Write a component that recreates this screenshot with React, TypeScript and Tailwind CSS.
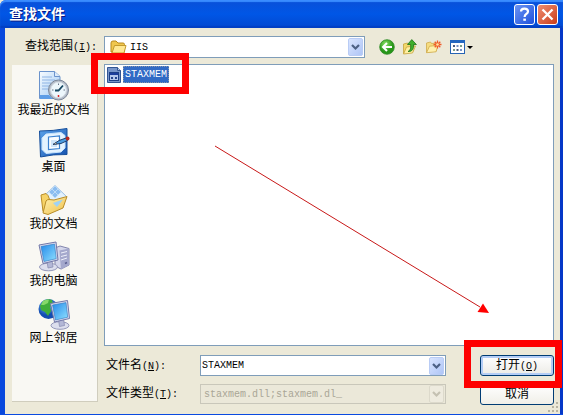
import React from 'react';

const cjk = "font-['Liberation_Sans','Noto_Sans_CJK_SC',sans-serif]";
const mono = "font-['Liberation_Mono','Noto_Sans_CJK_SC',monospace] text-[10px]";

export default function App() {
  return (
    <div className={`relative flex min-h-screen flex-col border-b border-[#0a4be0] bg-[#ece9d8] text-[12px] text-black ${cjk}`}>
      <TitleBar />
      <main className="flex flex-1 flex-col border-r-3 border-l-5 border-r-[#0538c8] border-l-[#0848dd] pt-2 pr-[6px] pl-[7px]">
        {/* Look-in row */}
        <div className="flex h-[22px] items-center">
          <label htmlFor="look-in" className="w-[92px] shrink-0 pl-[13px] leading-[18px] whitespace-nowrap">
            查找范围<Key letter="I" />
          </label>
          <div className="relative flex h-[22px] flex-1 items-center border border-[#7f9db9] bg-white">
            <span className="pointer-events-none absolute left-[5px]"><FolderIcon /></span>
            <select id="look-in" className={`h-full w-full appearance-none pl-[25px] outline-none ${mono}`}>
              <option>IIS</option>
            </select>
            <span className="pointer-events-none absolute right-px"><DropArrow /></span>
          </div>
          <div className="ml-[14px] flex w-[175px] items-center gap-[7px]">
            <button aria-label="后退"><BackIcon /></button>
            <button aria-label="向上一级"><UpIcon /></button>
            <button aria-label="新建文件夹"><NewFolderIcon /></button>
            <button aria-label="查看菜单"><ViewIcon /></button>
          </div>
        </div>

        <div className="mt-[6px] flex gap-[6px]">
          <Places />
          <div className="flex min-w-0 flex-1 flex-col">
            <FileList />
            <FileForm />
          </div>
        </div>
      </main>
      {/* Resize grip */}
      <svg className="absolute right-1 bottom-px" width="11" height="11" viewBox="0 0 11 11" fill="#b8b4a2" aria-hidden="true">
        <path d="M8 0h2v2H8zM4 4h2v2H4zM8 4h2v2H8zM0 8h2v2H0zM4 8h2v2H4zM8 8h2v2H8z" />
      </svg>
    </div>
  );
}

function TitleBar() {
  return (
    <header className="flex h-7 items-center rounded-tl-md bg-linear-to-b from-[#0a4fd8] via-[#0056e6] to-[#0348d0] pr-[5px] pl-[9px] shadow-[inset_0_2px_1px_#3a8cff,inset_0_-2px_1px_#0340c4]">
      <h1 className="flex-1 text-[14px] leading-5 font-bold text-white [text-shadow:1px_1px_0_#0a1883]">查找文件</h1>
      <div className="flex gap-[2px]">
        <button aria-label="帮助" className="flex h-[21px] w-[21px] items-center justify-center rounded-[3px] border border-white bg-linear-to-br from-[#6c93f2] to-[#1e4fdc]">
          <svg width="17" height="17" viewBox="0 0 17 17" fill="none" stroke="#fff" strokeWidth="2.2">
            <path d="M5 5.6C5 3.4 6.4 2.6 8.4 2.6s3.6 1 3.6 2.9c0 2.500-3.400 2.500-3.400 5.400" />
            <path d="M7.3 13.700h2.600" />
          </svg>
        </button>
        <button aria-label="关闭" className="flex h-[21px] w-[21px] items-center justify-center rounded-[3px] border border-white bg-linear-to-br from-[#ef8d70] to-[#c93a12]">
          <svg width="17" height="17" viewBox="0 0 17 17" stroke="#fff" strokeWidth="2.3">
            <path d="M3.5 3.5l10 10M13.5 3.5l-10 10" />
          </svg>
        </button>
      </div>
    </header>
  );
}

// Access key shown after a label, e.g. (N):
function Key({ letter, colon = true }: { letter: string; colon?: boolean }) {
  return (
    <span className="font-['Liberation_Mono',monospace] text-[10px]">
      (<span className="underline">{letter}</span>){colon && ':'}
    </span>
  );
}

const places = [
  { name: '我最近的文档', icon: <RecentIcon /> },
  { name: '桌面', icon: <DesktopIcon /> },
  { name: '我的文档', icon: <DocumentsIcon /> },
  { name: '我的电脑', icon: <ComputerIcon /> },
  { name: '网上邻居', icon: <NetworkIcon /> },
];

function Places() {
  return (
    <nav className="mt-px flex w-[86px] shrink-0 flex-col gap-[9px] self-start border-r border-b border-[#d0cdbd] bg-[#f9f8f3] pt-[5px] pr-[2px] pb-[55px]">
      {places.map((p) => (
        <button key={p.name} className="flex flex-col items-center leading-4 whitespace-nowrap">
          {p.icon}
          <span>{p.name}</span>
        </button>
      ))}
    </nav>
  );
}

function FileList() {
  return (
    <div className="relative h-[282px] border border-[#7f9db9] bg-white p-px">
      <button className="relative flex h-[17px] items-center gap-[2px] pl-px">
        <DllIcon />
        <span className={`h-[17px] border border-dotted border-[#8a97a8] bg-[#316ac5] px-px leading-[15px] text-white ${mono}`}>STAXMEM</span>
      </button>
      <div className="pointer-events-none absolute -top-[12px] -left-[14px] h-[41px] w-[98px] border-7 border-[#fe0000]" />
      <svg className="pointer-events-none absolute top-[80px] left-[109px]" width="276" height="170" viewBox="0 0 276 170" aria-hidden="true">
        <path d="M1 1L266 162" stroke="#c81818" strokeWidth="1" />
        <path d="M275 168l-11.500-1 5.500-8.500z" fill="#f00" />
      </svg>
    </div>
  );
}

function FileForm() {
  return (
    <form className="mt-[9px] grid grid-cols-[96px_1fr_74px] gap-y-[7px]" onSubmit={(e) => e.preventDefault()}>
      <label htmlFor="file-name" className="pl-[2px] leading-[21px]">
        文件名<Key letter="N" />
      </label>
      <div className="mr-[34px] flex h-[21px] items-center border border-[#7f9db9] bg-white pr-px">
        <input id="file-name" defaultValue="STAXMEM" className={`min-w-0 flex-1 pl-px outline-none ${mono}`} />
        <button type="button" aria-label="文件名列表"><DropArrow /></button>
      </div>
      <div className="relative">
        <button className="h-[21px] w-full rounded-[3px] border border-[#003c74] bg-linear-to-b from-white to-[#ecebe6] leading-[17px] shadow-[inset_0_0_0_2px_#b4cdf6]">
          打开<Key letter="O" colon={false} />
        </button>
        <div className="pointer-events-none absolute -top-[15px] -left-[16px] z-10 h-[48px] w-[98px] border-7 border-[#fe0000]" />
      </div>

      <label htmlFor="file-type" className="pl-[2px] leading-[19px]">
        文件类型<Key letter="T" />
      </label>
      <div className="relative mr-[34px] flex h-[20px] items-center border border-[#c9c7ba] bg-[#ebe8d9]">
        <select id="file-type" disabled className={`h-full w-full appearance-none pl-[3px] text-[#a9a696] opacity-100 ${mono}`}>
          <option>staxmem.dll;staxmem.dl_</option>
        </select>
        <span className="pointer-events-none absolute right-px"><DropArrow disabled /></span>
      </div>
      <button type="button" className="h-[21px] rounded-[3px] border border-[#003c74] bg-linear-to-b from-white to-[#f0efe8] leading-[19px]">取消</button>
    </form>
  );
}

function DropArrow({ disabled = false }: { disabled?: boolean }) {
  return (
    <svg className="block" width="15" height="18" viewBox="0 0 15 18">
      <defs>
        <linearGradient id="drop" x2="1" y2="1">
          <stop stopColor="#dbe6ff" />
          <stop offset="1" stopColor="#adc4f6" />
        </linearGradient>
      </defs>
      <rect x=".5" y=".5" width="14" height="17" rx="1.5" fill={disabled ? '#eeebdf' : 'url(#drop)'} stroke={disabled ? '#dcd9cb' : '#b9ccf5'} />
      <path d="M4 7l3.500 3.500L11 7" fill="none" stroke={disabled ? '#c4c1b2' : '#4d6185'} strokeWidth="2.200" />
    </svg>
  );
}

function FolderIcon() {
  return (
    <svg width="17" height="16" viewBox="0 0 17 16">
      <path d="M1 13V4q0-2 2-2h3l2 2h5q1.500 0 1.500 1.500V13z" fill="#f0c74e" stroke="#b98a1c" />
      <path d="M2 14L4.500 6.500H16L14 14z" fill="#ffe893" stroke="#c49a2c" />
    </svg>
  );
}

function DllIcon() {
  return (
    <svg width="14" height="16" viewBox="0 0 14 16">
      <path d="M.5.5h10l3 3v12H.5z" fill="#7795c9" stroke="#335693" />
      <path d="M10.500.5v3h3" fill="#b8c9e8" stroke="#335693" />
      <rect x="2.500" y="5.500" width="9" height="8" fill="#b5c8ec" stroke="#1d3f86" />
      <path d="M3 6h8v2H3z" fill="#1d3f9c" />
      <path d="M4 10h2v2H4zM8 10h2v2H8z" fill="#27468c" />
    </svg>
  );
}

function BackIcon() {
  return (
    <svg width="16" height="16" viewBox="0 0 16 16">
      <defs>
        <radialGradient id="back" cx=".4" cy=".3">
          <stop stopColor="#8be266" />
          <stop offset="1" stopColor="#279618" />
        </radialGradient>
      </defs>
      <circle cx="8" cy="8" r="7.300" fill="url(#back)" stroke="#2f8a26" strokeWidth=".8" />
      <path d="M13 8H4.500M8 4L4 8l4 4" fill="none" stroke="#fff" strokeWidth="2" />
    </svg>
  );
}

function UpIcon() {
  return (
    <svg width="16" height="16" viewBox="0 0 16 16">
      <path d="M1.500 14.500V5l4-1 1 1.500 5-.5v7z" fill="#f3d76c" stroke="#c7a33c" strokeWidth=".8" />
      <path d="M1.500 15l3-7 9-1-3 7z" fill="#fff0a2" stroke="#c7a33c" strokeWidth=".8" />
      <path d="M6 12.500c2.500-1 3-3.500 2.600-7H5.500L9.800.6l4.600 4.900h-2.800c.4 4.500-1.600 7.500-5.600 7z" fill="#3fae2c" stroke="#1f7418" strokeWidth=".8" />
    </svg>
  );
}

function NewFolderIcon() {
  return (
    <svg width="17" height="16" viewBox="0 0 17 16">
      <path d="M1.500 13.500V4l4-1 1 1.500 5-.5v8z" fill="#f5dc80" stroke="#cfab4c" strokeWidth=".8" />
      <path d="M1.500 13.700l3-6.500 8.500-.7-2 6.300z" fill="#fff0ac" stroke="#cfab4c" strokeWidth=".8" />
      <path d="M12.500 1.500v8M8.500 5.500h8M9.700 2.700l5.600 5.600M15.300 2.700L9.700 8.300" stroke="#f05a28" strokeWidth="1.300" />
      <circle cx="12.500" cy="5.500" r="1.300" fill="#ffe6a0" />
    </svg>
  );
}

function ViewIcon() {
  return (
    <svg width="24" height="16" viewBox="0 0 24 16">
      <rect x="1.500" y="1.500" width="14" height="13" fill="#fff" stroke="#2764b4" />
      <path d="M1 1h15v3H1z" fill="#2467c0" />
      <path d="M4 6h2v2H4zM7.500 10h2v2h-2z" fill="#4a5b80" />
      <path d="M7.500 6h2v2h-2zM11 10h2v2h-2z" fill="#7794c6" />
      <path d="M11 6h2v2h-2zM4 10h2v2H4z" fill="#7ba08a" />
      <path d="M18 7h6l-3 3z" fill="#000" />
    </svg>
  );
}

function RecentIcon() {
  return (
    <svg width="32" height="32" viewBox="0 0 32 32">
      <defs>
        <linearGradient id="page" x2="1" y2="1">
          <stop stopColor="#f8fcff" />
          <stop offset="1" stopColor="#9cc8f4" />
        </linearGradient>
      </defs>
      <path d="M1.500 1.500h15l5.500 5v22H1.500z" fill="url(#page)" stroke="#6b93cc" />
      <path d="M16.500 1.500v5H22" fill="#dcebfb" stroke="#6b93cc" />
      <path d="M4 7h10M4 10h13M4 13h9M4 16h7M4 19h6" stroke="#8fb4e4" />
      <path d="M2 25h9l4 4H2z" fill="#5d9de6" />
      <circle cx="20.500" cy="20" r="10" fill="#b4bcc8" stroke="#7a8698" />
      <circle cx="20.500" cy="20" r="7.800" fill="#edf7fc" stroke="#d8e0e8" />
      <path d="M20.500 13.500v1.500M14 20h1.500M25.500 20H27" stroke="#687488" />
      <path d="M20.500 25v2" stroke="#d22" strokeWidth="1.500" />
      <path d="M17 20.500h3.500l4.500-5" fill="none" stroke="#174862" strokeWidth="1.800" />
    </svg>
  );
}

function DesktopIcon() {
  return (
    <svg width="32" height="32" viewBox="0 0 32 32">
      <defs>
        <linearGradient id="desk" x2="1" y2="1">
          <stop stopColor="#5aa2ea" />
          <stop offset="1" stopColor="#1552ae" />
        </linearGradient>
      </defs>
      <path d="M1.500 4Q15 4 29 1.500v26Q15 27 2.500 30z" fill="url(#desk)" stroke="#174f9b" />
      <path d="M4 11l4-4 15-1.500 4 3V21l-4 4-15 1.500-4-4z" fill="#e4f3ff" stroke="#c4e2fc" />
      <path d="M10.500 10l11-1v12.500l-11 1z" fill="#fafdff" stroke="#3c82d0" strokeWidth="1.200" />
      <path d="M13 13h6v7h-6z" fill="#cfe6fa" />
      <path d="M15 17.500l6-4 7-2.500 1.500 2.500-6.500 3z" fill="#4a9ce0" stroke="#14315f" strokeWidth=".9" />
      <path d="M15 17.500l3-2 .8 1.500z" fill="#f7d9a5" stroke="#14315f" strokeWidth=".5" />
      <circle cx="29.600" cy="11.500" r="1.900" fill="#b8281f" />
    </svg>
  );
}

function DocumentsIcon() {
  return (
    <svg width="32" height="32" viewBox="0 0 32 32">
      <defs>
        <linearGradient id="docs" x2="1" y2="1">
          <stop stopColor="#fff2b4" />
          <stop offset="1" stopColor="#efbf45" />
        </linearGradient>
      </defs>
      <path d="M17 1.500L29 13 17 25 6 12z" fill="#e2f1fd" stroke="#9cc0e4" />
      <path d="M14 5l3-3 3 3-3 3zM17 8l3-3 3 3-3 3zM11 8l3-3 3 3-3 3zM14 11l3-3 3 3-3 3z" fill="#8bbdf0" stroke="#c2def8" strokeWidth=".7" />
      <path d="M3 11l5-1.500 2 2 2 5-5 12-2-1z" fill="#f6d368" stroke="#b98d28" />
      <path d="M5 29l3-12q1-1.500 3-1.500l5 .5 13-3.500L25 24 10 30.500z" fill="url(#docs)" stroke="#b98d28" />
      <path d="M15 19l10-3.500-6 7.500z" fill="#9ed2f5" />
    </svg>
  );
}

// Tilted flat screen used by the computer and network icons
function Monitor() {
  return (
    <g>
      <defs>
        <linearGradient id="screen" x2="1" y2="1">
          <stop stopColor="#2389e9" />
          <stop offset="1" stopColor="#8fe0ff" />
        </linearGradient>
      </defs>
      <ellipse cx="10.500" cy="26" rx="9" ry="3.800" fill="#dcdeed" stroke="#9598ba" />
      <path d="M9 20l5-1 1 7-5 1z" fill="#b3b7d6" stroke="#8589af" strokeWidth=".7" />
      <path d="M1 4l17-3 2 18-15 3.500z" fill="#dadcf0" stroke="#7378a8" />
      <path d="M3 5.500l13.500-2.400 1.700 14.600L6 20.500z" fill="url(#screen)" stroke="#2f79bf" strokeWidth=".6" />
    </g>
  );
}

function ComputerIcon() {
  return (
    <svg width="32" height="32" viewBox="0 0 32 32">
      <path d="M17 7l5-2 9 2.500V24l-8 4-6-3z" fill="#d4d6ea" stroke="#8185ac" />
      <path d="M21.500 9.500L31 7.500V24l-8 4.500z" fill="#a4a8cc" />
      <path d="M23 12l6-1.500M23 15.500l6-1.500M23 19l6-2" stroke="#eef0fa" />
      <path d="M27 22.500l2-1" stroke="#5a5f90" strokeWidth="1.500" />
      <Monitor />
    </svg>
  );
}

function NetworkIcon() {
  return (
    <svg width="32" height="32" viewBox="0 0 32 32">
      <defs>
        <radialGradient id="globe" cx=".4" cy=".3">
          <stop stopColor="#7bc8ff" />
          <stop offset="1" stopColor="#124cb2" />
        </radialGradient>
      </defs>
      <circle cx="10.500" cy="11" r="10" fill="url(#globe)" />
      <path d="M5 3q5-3 9-1l1 4-3 3 1 4-3 5-3-4-4-2-1-4z" fill="#3fae3a" />
      <path d="M5 3q3-2 6-1.500L10 5 6 7 3 7z" fill="#86d96a" />
      <g transform="translate(11.500 1.500)"><Monitor /></g>
    </svg>
  );
}
